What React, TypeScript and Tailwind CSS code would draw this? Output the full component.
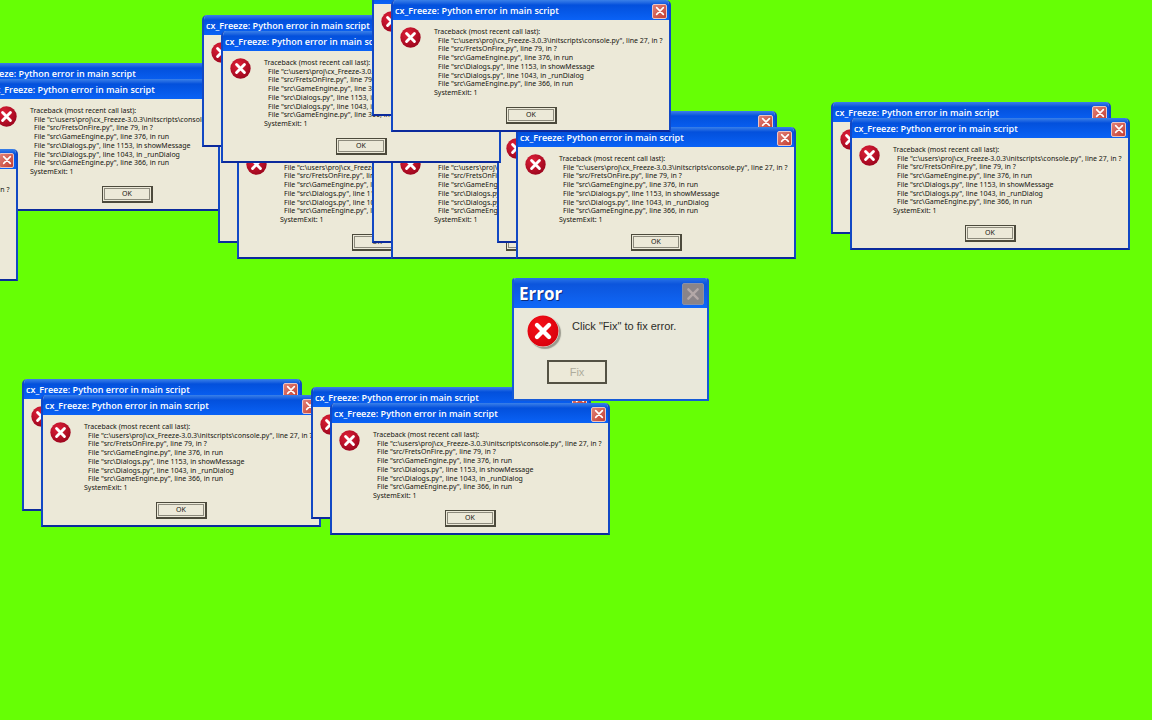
type CrashDialog = { id: string; place: string };

const TRACEBACK: string[] = [
  'File "c:\\users\\proj\\cx_Freeze-3.0.3\\initscripts\\console.py", line 27, in ?',
  'File "src/FretsOnFire.py", line 79, in ?',
  'File "src\\GameEngine.py", line 376, in run',
  'File "src\\Dialogs.py", line 1153, in showMessage',
  'File "src\\Dialogs.py", line 1043, in _runDialog',
  'File "src\\GameEngine.py", line 366, in run',
];

// Listed from the bottom of the stack to the top.
const DIALOGS: CrashDialog[] = [
  { id: "a1", place: "-left-[32px] top-[63px]" },
  { id: "a2", place: "-left-[13px] top-[79px]" },
  { id: "b1", place: "-left-[262px] top-[149px]" },
  { id: "c1", place: "left-[218px] top-[111px]" },
  { id: "c2", place: "left-[237px] top-[127px]" },
  { id: "d1", place: "left-[372px] top-[111px]" },
  { id: "d2", place: "left-[391px] top-[127px]" },
  { id: "e1", place: "left-[497px] top-[111px]" },
  { id: "e2", place: "left-[516px] top-[127px]" },
  { id: "f1", place: "left-[202px] top-[15px]" },
  { id: "f2", place: "left-[221px] top-[31px]" },
  { id: "g1", place: "left-[372px] -top-[16px]" },
  { id: "g2", place: "left-[391px] top-0" },
  { id: "h1", place: "left-[831px] top-[102px]" },
  { id: "h2", place: "left-[850px] top-[118px]" },
  { id: "i1", place: "left-[22px] top-[379px]" },
  { id: "i2", place: "left-[41px] top-[395px]" },
  { id: "j1", place: "left-[311px] top-[387px]" },
  { id: "j2", place: "left-[330px] top-[403px]" },
];

function StopIcon({ id, className, from, to }: { id: string; className: string; from: string; to: string }) {
  return (
    <svg viewBox="0 0 32 32" className={className} aria-hidden="true">
      <defs>
        <radialGradient id={id} cx="0.38" cy="0.32" r="0.75">
          <stop offset="0" stopColor={from} />
          <stop offset="1" stopColor={to} />
        </radialGradient>
      </defs>
      <circle cx="16" cy="16" r="15.5" fill={`url(#${id})`} />
      <path d="M10 10 22 22M22 10 10 22" stroke="#fff" strokeWidth="4.4" strokeLinecap="round" />
    </svg>
  );
}

function Cross({ className }: { className: string }) {
  return (
    <svg viewBox="0 0 12 12" className={className} aria-hidden="true">
      <path d="M2 2 10 10M10 2 2 10" stroke="currentColor" strokeWidth="2" strokeLinecap="round" />
    </svg>
  );
}

function Crash({ id, place }: CrashDialog) {
  return (
    <section
      aria-labelledby={`title-${id}`}
      className={`absolute flex h-[132px] w-[280px] flex-col overflow-hidden rounded-t-[5px] border-x-2 border-b-2 border-x-[#1248c4] border-b-[#0b2a9c] bg-[#ece9d8] ${place}`}
    >
      <header className="flex h-5 shrink-0 items-center justify-between bg-linear-to-b from-[#3a80e8] via-[#0350dc] via-25% to-[#0a62f6] pt-[2px] pr-[2px] pl-[2px]">
        <h2
          id={`title-${id}`}
          className="text-[9px] leading-[14px] font-semibold whitespace-nowrap text-white [font-family:'Open_Sans','Noto_Sans',sans-serif]"
        >
          cx_Freeze: Python error in main script
        </h2>
        <button
          type="button"
          aria-label="Close"
          className="flex size-[15px] items-center justify-center rounded-[2px] border border-[#e9c4c4] bg-linear-to-br from-[#e08078] to-[#c43c30] text-white"
        >
          <Cross className="size-[10px]" />
        </button>
      </header>
      <div className="flex gap-[13px] pt-[7px] pl-[7px]">
        <StopIcon id={`stop-${id}`} className="size-[21px] shrink-0" from="#e02038" to="#98041c" />
        <div className="flex h-[70px] flex-col justify-between pt-px text-[7px] leading-[8px] whitespace-nowrap text-[#14140f] [font-family:'Noto_Sans','Open_Sans',sans-serif]">
          <p>Traceback (most recent call last):</p>
          {TRACEBACK.map((line) => (
            <p key={line} className="pl-1">
              {line}
            </p>
          ))}
          <p>SystemExit: 1</p>
        </div>
      </div>
      <button
        type="button"
        className="mt-[10px] ml-[113px] flex h-[17px] w-[51px] shrink-0 items-center justify-center border-t border-r-2 border-b-2 border-l border-[#4c4a3c] bg-[#ece9d8] p-px text-[7px] leading-[8px] text-[#14140f] [font-family:'Noto_Sans','Open_Sans',sans-serif]"
      >
        <span className="flex h-full w-full items-center justify-center border border-[#8c8a7c]">OK</span>
      </button>
    </section>
  );
}

export default function App() {
  return (
    <main className="relative min-h-screen overflow-hidden bg-[#66ff05]">
      {DIALOGS.map((dialog) => (
        <Crash key={dialog.id} {...dialog} />
      ))}
      <section
        aria-labelledby="title-error"
        className="absolute top-[278px] left-[512px] flex h-[123px] w-[197px] flex-col rounded-t-[3px] border-2 border-t-0 border-[#155ad6] bg-[#e9e8da]"
      >
        <header className="flex h-[30px] shrink-0 items-center justify-between rounded-t-[2px] bg-linear-to-b from-[#2a74e8] via-[#0c55dc] via-20% to-[#1068f8] pt-[2px] pr-[3px] pl-[5px]">
          <h2
            id="title-error"
            className="text-[17px] leading-5 font-bold text-white [font-family:'Open_Sans','Noto_Sans',sans-serif] [text-shadow:1px_1px_0_#0a2c80]"
          >
            Error
          </h2>
          <button
            type="button"
            disabled
            aria-label="Close"
            className="flex size-[22px] items-center justify-center rounded-[2px] border border-[#8890a8] bg-[#8a8488] text-[#b4a8a8]"
          >
            <Cross className="size-[14px]" />
          </button>
        </header>
        <div className="flex gap-[13px] pt-[7px] pl-[13px]">
          <StopIcon
            id="stop-error"
            className="size-8 shrink-0 rounded-full shadow-[2px_2px_1px_rgba(90,90,80,0.55)]"
            from="#f41018"
            to="#d8000c"
          />
          <p className="pt-1 text-[11px] leading-[14px] whitespace-nowrap text-[#2c2c28] [font-family:'Liberation_Sans',sans-serif]">
            Click "Fix" to fix error.
          </p>
        </div>
        <button
          type="button"
          disabled
          className="mt-[13px] ml-[33px] h-6 w-[60px] border-2 border-[#545244] bg-[#ece9d8] text-[11px] leading-[14px] text-[#aeac9c] [font-family:'Liberation_Sans',sans-serif]"
        >
          Fix
        </button>
      </section>
    </main>
  );
}
